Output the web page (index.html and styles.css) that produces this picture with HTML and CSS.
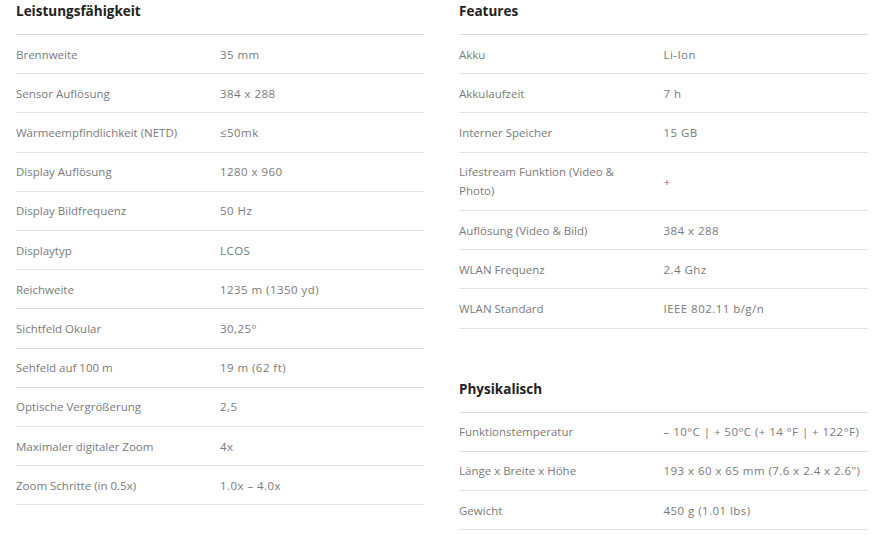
FILE: index.html
```html
<!DOCTYPE html>
<html lang="de">
<head>
<meta charset="utf-8">
<title>Technische Daten</title>
<link rel="stylesheet" href="styles.css">
</head>
<body>
<div class="specs">
  <div class="col">
    <section class="group">
      <h3 class="title">Leistungsfähigkeit</h3>
      <div class="table">
        <div class="row"><div class="k">Brennweite</div><div class="v">35 mm</div></div>
        <div class="row"><div class="k">Sensor Auflösung</div><div class="v">384 x 288</div></div>
        <div class="row"><div class="k">Wärmeempfindlichkeit (NETD)</div><div class="v">≤50mk</div></div>
        <div class="row"><div class="k">Display Auflösung</div><div class="v">1280 x 960</div></div>
        <div class="row"><div class="k">Display Bildfrequenz</div><div class="v">50 Hz</div></div>
        <div class="row"><div class="k">Displaytyp</div><div class="v">LCOS</div></div>
        <div class="row"><div class="k">Reichweite</div><div class="v">1235 m (1350 yd)</div></div>
        <div class="row"><div class="k">Sichtfeld Okular</div><div class="v">30,25°</div></div>
        <div class="row"><div class="k">Sehfeld auf 100 m</div><div class="v">19 m (62 ft)</div></div>
        <div class="row"><div class="k">Optische Vergrößerung</div><div class="v">2,5</div></div>
        <div class="row"><div class="k">Maximaler digitaler Zoom</div><div class="v">4x</div></div>
        <div class="row"><div class="k">Zoom Schritte (in 0.5x)</div><div class="v">1.0x – 4.0x</div></div>
      </div>
    </section>
  </div>
  <div class="col">
    <section class="group">
      <h3 class="title">Features</h3>
      <div class="table">
        <div class="row"><div class="k">Akku</div><div class="v">Li-Ion</div></div>
        <div class="row"><div class="k">Akkulaufzeit</div><div class="v">7 h</div></div>
        <div class="row"><div class="k">Interner Speicher</div><div class="v">15 GB</div></div>
        <div class="row"><div class="k">Lifestream Funktion (Video &amp; Photo)</div><div class="v">+</div></div>
        <div class="row"><div class="k">Auflösung (Video &amp; Bild)</div><div class="v">384 x 288</div></div>
        <div class="row"><div class="k">WLAN Frequenz</div><div class="v">2.4 Ghz</div></div>
        <div class="row"><div class="k">WLAN Standard</div><div class="v">IEEE 802.11 b/g/n</div></div>
      </div>
    </section>
    <section class="group group-gap">
      <h3 class="title">Physikalisch</h3>
      <div class="table">
        <div class="row"><div class="k">Funktionstemperatur</div><div class="v">– 10°C | + 50°C (+ 14 °F | + 122°F)</div></div>
        <div class="row"><div class="k">Länge x Breite x Höhe</div><div class="v">193 x 60 x 65 mm (7.6 x 2.4 x 2.6")</div></div>
        <div class="row"><div class="k">Gewicht</div><div class="v">450 g (1.01 lbs)</div></div>
      </div>
    </section>
  </div>
</div>
</body>
</html>
```
FILE: styles.css
```css
html, body {
  margin: 0;
  padding: 0;
  background: #ffffff;
}
body {
  font-family: "Open Sans", "Noto Sans", "DejaVu Sans", sans-serif;
  color: #7a7a7a;
}
.specs {
  display: grid;
  grid-template-columns: 408px 409px;
  column-gap: 35px;
  padding-left: 16px;
}
.title {
  margin: 0;
  height: 35px;
  box-sizing: border-box;
  padding-top: 1px;
  font-size: 13.5px;
  line-height: 20px;
  font-weight: 700;
  color: #222222;
  border-bottom: 1px solid #dcdcdc;
}
.group-gap {
  margin-top: 49px;
}
.row {
  display: grid;
  grid-template-columns: 1fr 1fr;
  align-items: center;
  padding: 9.5px 0;
  border-bottom: 1px solid #e2e2e2;
  font-size: 11.5px;
  line-height: 19.2px;
}
.k {
  padding-right: 20px;
}
.v {
  letter-spacing: 0.45px;
}
```
